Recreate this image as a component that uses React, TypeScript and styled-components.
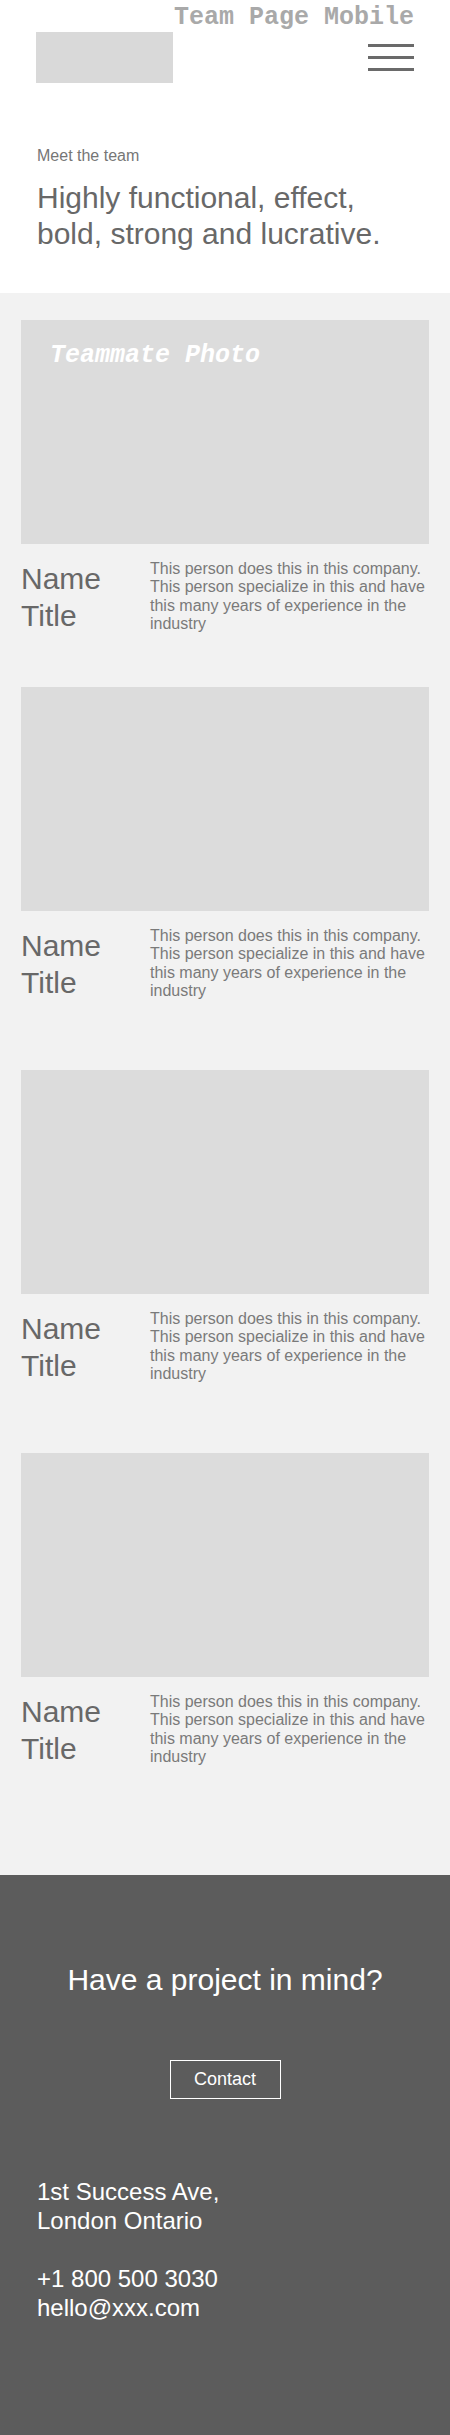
import styled, { createGlobalStyle } from "styled-components";

const members = [1, 2, 3, 4];

export default function App() {
  return (
    <Page>
      <GlobalStyle />

      <Header>
        <PageLabel>Team Page Mobile</PageLabel>
        <TopBar>
          <Logo />
          <Burger type="button" aria-label="menu">
            <BurgerLine />
            <BurgerLine />
            <BurgerLine />
          </Burger>
        </TopBar>
      </Header>

      <Hero>
        <Eyebrow>Meet the team</Eyebrow>
        <Headline>
          Highly functional, effect,
          <br />
          bold, strong and lucrative.
        </Headline>
      </Hero>

      <TeamSection>
        {members.map((m, i) => (
          <Card key={m} $after={i === 0 ? 53 : i === members.length - 1 ? 0 : 69}>
            <Photo>{i === 0 && <PhotoLabel>Teammate Photo</PhotoLabel>}</Photo>
            <Info>
              <NameBlock>
                Name
                <br />
                Title
              </NameBlock>
              <Bio>
                This person does this in this company. This person specialize in
                this and have this many years of experience in the industry
              </Bio>
            </Info>
          </Card>
        ))}
      </TeamSection>

      <Footer>
        <CallOut>Have a project in mind?</CallOut>
        <ContactButton type="button">Contact</ContactButton>
        <ContactInfo>
          <InfoLines>
            1st Success Ave,
            <br />
            London Ontario
          </InfoLines>
          <InfoLines>
            +1 800 500 3030
            <br />
            hello@xxx.com
          </InfoLines>
        </ContactInfo>
      </Footer>
    </Page>
  );
}

/* ===== global ===== */

const GlobalStyle = createGlobalStyle`
  html, body {
    margin: 0;
    padding: 0;
    background: #ffffff;
  }
  * {
    box-sizing: border-box;
  }
`;

const Page = styled.div`
  width: 450px;
  font-family: "Liberation Sans", Arial, sans-serif;
`;

/* ===== header ===== */

const Header = styled.header`
  padding: 4px 36px 0;
`;

/** 와이어프레임 라벨 */
const PageLabel = styled.div`
  font-family: "Liberation Mono", "Courier New", monospace;
  font-weight: 700;
  font-size: 25px;
  line-height: 28px;
  color: #a9a9a9;
  text-align: right;
`;

const TopBar = styled.div`
  display: flex;
  justify-content: space-between;
  align-items: center;
`;

const Logo = styled.div`
  width: 137px;
  height: 51px;
  background: #d9d9d9;
`;

const Burger = styled.button`
  width: 46px;
  padding: 0;
  border: none;
  background: none;
  display: flex;
  flex-direction: column;
  gap: 9px;
  cursor: pointer;
`;

const BurgerLine = styled.span`
  display: block;
  height: 3px;
  background: #6a6a6a;
`;

/* ===== hero ===== */

const Hero = styled.section`
  padding: 63px 37px 41px;
`;

const Eyebrow = styled.p`
  margin: 0 0 14px;
  font-size: 16px;
  line-height: 20px;
  color: #767676;
`;

const Headline = styled.h1`
  margin: 0;
  font-size: 30px;
  line-height: 36px;
  font-weight: 400;
  color: #686868;
`;

/* ===== team ===== */

const TeamSection = styled.section`
  background: #f2f2f2;
  padding: 27px 21px 108px;
`;

const Card = styled.article<{ $after: number }>`
  margin-bottom: ${(p) => p.$after}px;
`;

const Photo = styled.div`
  height: 224px;
  background: #dcdcdc;
  padding: 22px 29px;
`;

const PhotoLabel = styled.span`
  font-family: "Liberation Mono", "Courier New", monospace;
  font-weight: 700;
  font-style: italic;
  font-size: 25px;
  line-height: 28px;
  color: #ffffff;
`;

const Info = styled.div`
  display: flex;
  align-items: flex-start;
  margin-top: 16px;
`;

const NameBlock = styled.div`
  width: 129px;
  flex-shrink: 0;
  font-size: 30px;
  line-height: 37px;
  color: #686868;
`;

const Bio = styled.p`
  margin: 0;
  width: 279px;
  font-size: 16px;
  line-height: 18.4px;
  color: #7a7a7a;
`;

/* ===== footer ===== */

const Footer = styled.footer`
  background: #5c5c5c;
  color: #ffffff;
  padding: 87px 37px 113px;
  display: flex;
  flex-direction: column;
  align-items: center;
`;

const CallOut = styled.h2`
  margin: 0;
  font-size: 30px;
  line-height: 36px;
  font-weight: 400;
  text-align: center;
`;

const ContactButton = styled.button`
  margin-top: 62px;
  width: 111px;
  height: 39px;
  border: 1px solid #ffffff;
  background: transparent;
  color: #ffffff;
  font-family: "Liberation Sans", Arial, sans-serif;
  font-size: 18px;
  cursor: pointer;
`;

const ContactInfo = styled.div`
  align-self: stretch;
  margin-top: 78px;
  display: flex;
  flex-direction: column;
  gap: 29px;
`;

const InfoLines = styled.p`
  margin: 0;
  font-size: 24px;
  line-height: 29px;
`;
